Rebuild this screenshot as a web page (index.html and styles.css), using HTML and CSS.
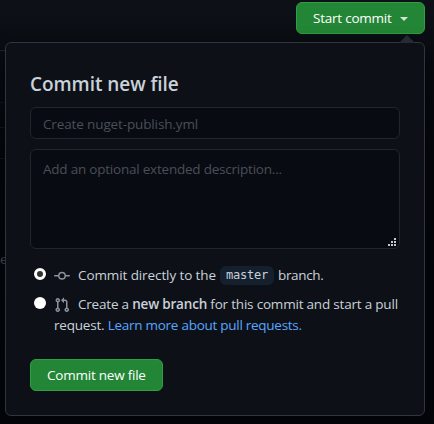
FILE: index.html
```
<!DOCTYPE html>
<html lang="en">
<head>
<meta charset="utf-8">
<title>Commit new file</title>
<link rel="stylesheet" href="styles.css">
</head>
<body>
<div class="backdrop"><span class="rule"></span><span class="row"></span><span class="row-end"></span><span class="peek">e</span></div>
<div class="toolbar"><button class="btn start"><span class="start-label">Start commit</span><span class="caret"></span></button></div>
<form class="popover">
  <h1><span>Commit new file</span></h1>
  <input type="text" placeholder="Create nuget-publish.yml">
  <div class="area">
    <textarea placeholder="Add an optional extended description..."></textarea>
    <svg class="grip" width="9" height="9" viewBox="0 0 9 9" fill="#c9c9c9" shape-rendering="crispEdges"><path d="M6 0h2v2H6zM3 3h2v2H3zM6 3h2v2H6zM0 6h2v2H0zM3 6h2v2H3zM6 6h2v2H6z"/></svg>
  </div>
  <label class="choice direct">
    <span class="radio checked"></span>
    <svg class="icon" width="16" height="16" viewBox="0 0 16 16" fill="#8b949e"><path fill-rule="evenodd" d="M10.5 7.75a2.5 2.5 0 11-5 0 2.5 2.5 0 015 0zm1.43.75a4.002 4.002 0 01-7.86 0H.75a.75.75 0 110-1.5h3.32a4.001 4.001 0 017.86 0h3.32a.75.75 0 110 1.5h-3.32z"/></svg>
    <span class="line"><span class="lead">Commit directly to the</span><code>master</code><span class="tail">branch.</span></span>
  </label>
  <label class="choice pull">
    <span class="radio"></span>
    <svg class="icon" width="16" height="16" viewBox="0 0 16 16" fill="#8b949e"><path fill-rule="evenodd" d="M7.177 3.073L9.573.677A.25.25 0 0110 .854v4.792a.25.25 0 01-.427.177L7.177 3.427a.25.25 0 010-.354zM3.75 2.5a.75.75 0 100 1.5.75.75 0 000-1.5zm-2.25.75a2.25 2.25 0 113 2.122v5.256a2.251 2.251 0 11-1.5 0V5.372A2.25 2.25 0 011.5 3.25zM11 2.5h-1V4h1a1 1 0 011 1v5.628a2.251 2.251 0 101.5 0V5A2.5 2.5 0 0011 2.5zm1 10.25a.75.75 0 111.5 0 .75.75 0 01-1.5 0zM3.75 12a.75.75 0 100 1.5.75.75 0 000-1.5z"/></svg>
    <span class="line">Create a <b>new branch</b> for this commit and start a pull</span>
    <span class="line second"><span>request. <a>Learn more about pull requests.</a></span></span>
  </label>
  <button type="button" class="btn submit"><span>Commit new file</span></button>
</form>
</body>
</html>
```
FILE: styles.css
```
* { box-sizing: border-box; }
html { height: 100%; overflow: hidden; }
body {
  margin: 0;
  height: 424px;
  overflow: hidden;
  background: linear-gradient(#0d1117 0, #090c11 60px, #05070b 160px, #04060a 100%);
  color: #c9d1d9;
  font: 13.5px/22px "Open Sans", "Noto Sans", sans-serif;
  letter-spacing: -0.2px;
}
.backdrop { position: absolute; top: 50px; left: 0; width: 5px; height: 220px; overflow: hidden; }
.backdrop span { position: absolute; left: 0; }
.rule { top: 0; width: 5px; height: 1px; background: #252a31; }
.row { top: 52px; width: 5px; height: 26px; border: solid #171b21; border-width: 1px 0; }
.row-end { top: 108px; width: 5px; height: 1px; background: #171b21; }
.backdrop .peek { top: 198px; left: 0; color: #5d646c; }
.toolbar { display: flex; justify-content: flex-end; padding: 2px 9px 0 0; height: 42px; }
.btn {
  display: flex;
  align-items: center;
  height: 32px;
  padding: 0 16px;
  border: 1px solid #2ea043;
  border-radius: 6px;
  background: #238636;
  color: #fff;
  font: inherit;
  letter-spacing: -0.23px;
  white-space: nowrap;
}
.start { width: 129px; }
.caret { margin: 2px 0 0 8px; border: 4px solid transparent; border-top-color: #cfe6d3; border-bottom: 0; }
.popover {
  position: relative;
  width: 420px;
  height: 374px;
  margin-left: 5px;
  padding: 28px 24px 0;
  border: 1px solid #30363d;
  border-radius: 6px;
  background: #0d1117;
  box-shadow: 0 8px 20px #010409;
}
.popover::before {
  content: "";
  position: absolute;
  top: -8px;
  right: 9px;
  border: 8px solid transparent;
  border-top: 0;
  border-bottom-color: #252b32;
}
h1 { margin: 0 0 10px; font-size: 19px; line-height: 26px; font-weight: 600; letter-spacing: -0.05px; }
input, textarea {
  display: block;
  width: 370px;
  border: 1px solid #21262d;
  border-radius: 6px;
  outline: 0;
  background: #080b11;
  color: #c9d1d9;
  font: inherit;
}
input { height: 32px; padding: 6px 12px 4px; letter-spacing: -0.13px; }
textarea { height: 100px; padding: 8px 12px; resize: none; letter-spacing: -0.22px; }
::placeholder { color: #484f58; opacity: 1; }
.area { position: relative; margin-top: 10px; }
.grip { position: absolute; right: 3px; bottom: 2px; }
.choice { display: grid; grid-template-columns: 24px 24px 1fr; white-space: nowrap; }
.direct { margin-top: 15px; }
.pull { margin-top: 7px; grid-template-rows: 21px 22px; }
.radio { width: 12px; height: 12px; margin: 4px 0 0 4px; border-radius: 50%; background: #fff; }
.checked { border: 3px solid #fff; background: #333; }
.icon { margin-top: 4px; }
.line { display: flex; white-space: pre; }
.second { grid-column: 2 / 4; }
.lead { width: 142px; letter-spacing: -0.1px; }
.tail { letter-spacing: -0.35px; }
code {
  width: 54px;
  height: 19px;
  margin: 2px 4px 0 0;
  border-radius: 6px;
  background: #14202d;
  font: 12px/18px "DejaVu Sans Mono", monospace;
  letter-spacing: -0.2px;
  text-align: center;
}
b { font-weight: 600; }
a { color: #58a6ff; letter-spacing: -0.27px; }
.submit { margin-top: 23px; width: 133px; }
```
